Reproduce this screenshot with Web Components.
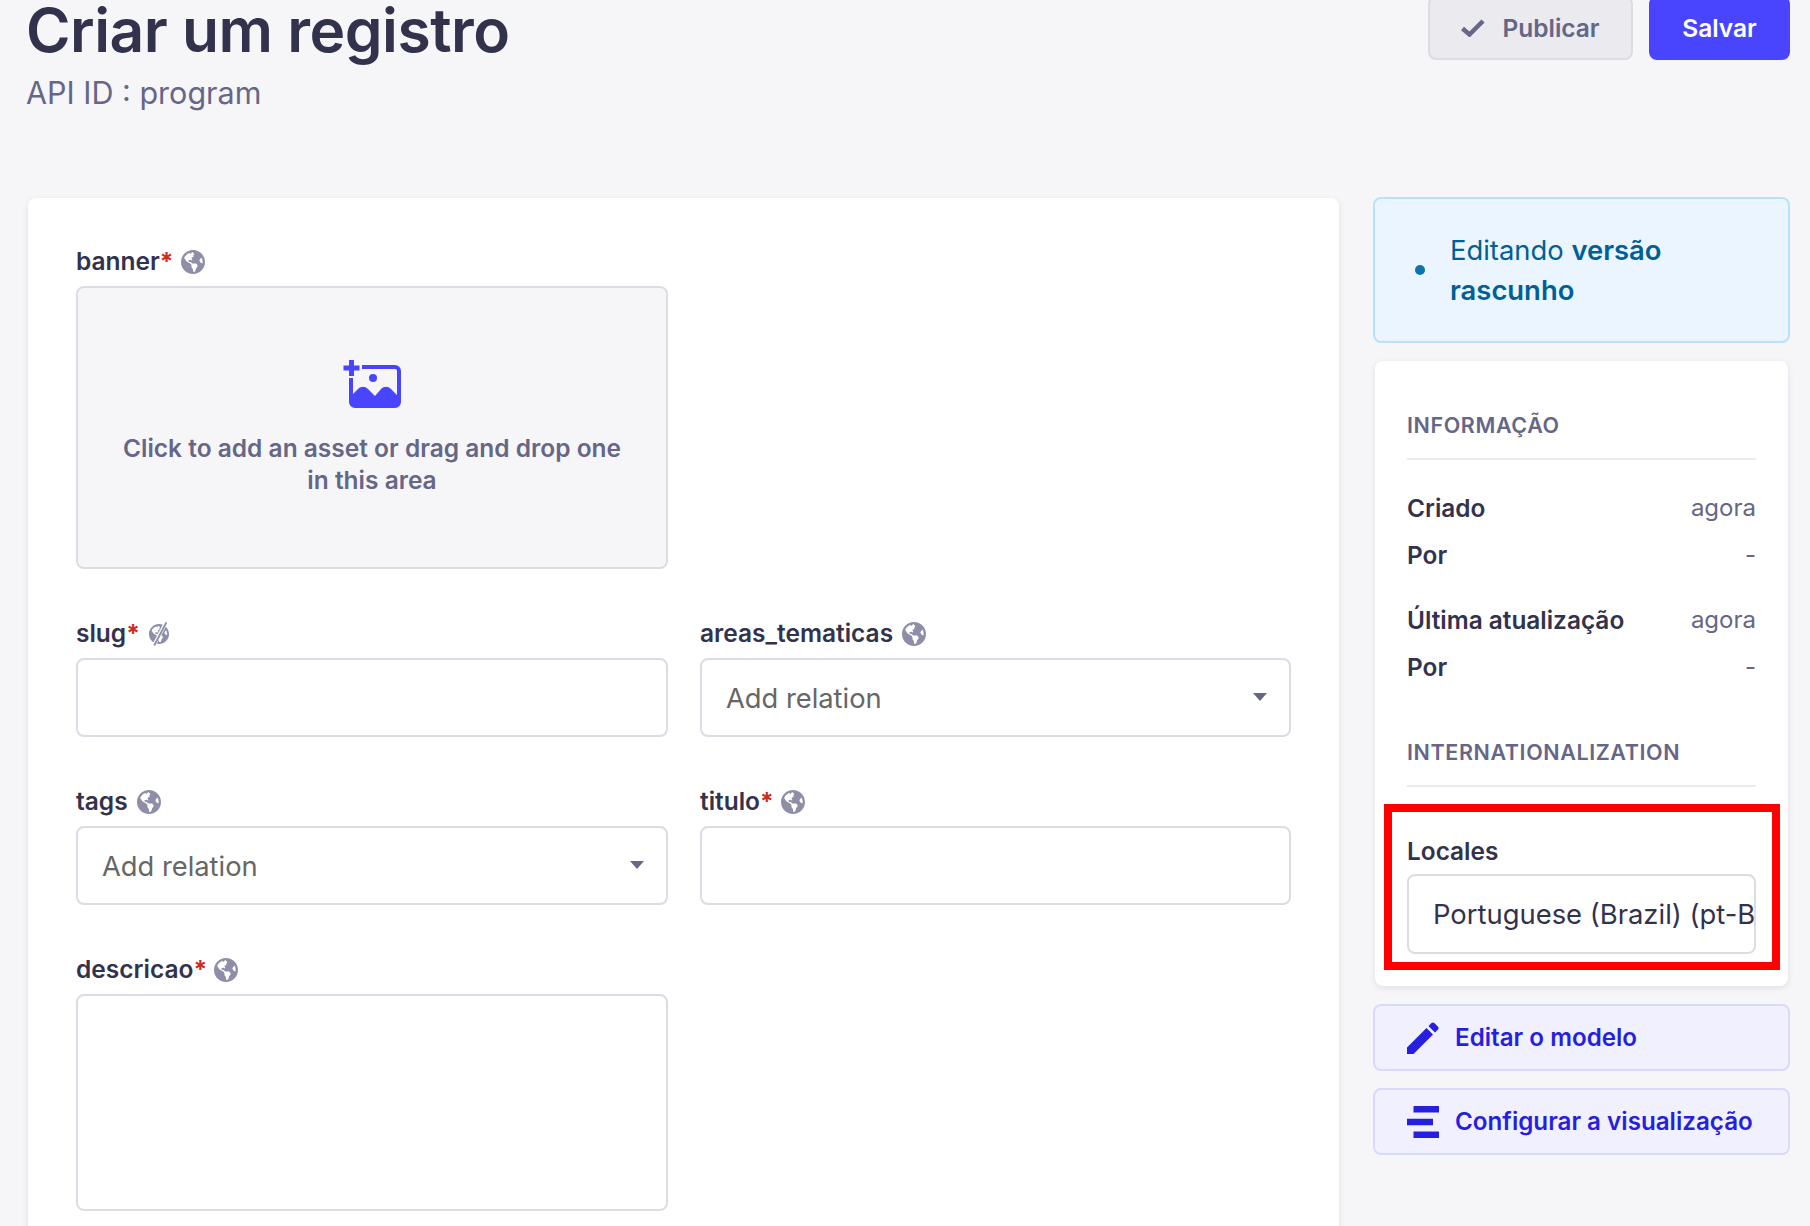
<!DOCTYPE html>
<html lang="pt-BR">
<head>
<meta charset="utf-8">
<title>Criar um registro</title>
<style>
  html, body { margin: 0; padding: 0; background: #f6f6f9; }
  body { font-family: Inter, "Liberation Sans", sans-serif; color: #32324d; height: 1226px; overflow: hidden; }
</style>
</head>
<body>
<edit-page>
  <page-header slot="header" heading="Criar um registro" sub="API ID : program"></page-header>
  <form-card slot="main">
    <form-field label="banner" required wide>
      <asset-drop>Click to add an asset or drag and drop one in this area</asset-drop>
    </form-field>
    <form-field label="slug" required nolocale><text-box></text-box></form-field>
    <form-field label="areas_tematicas"><text-box select placeholder="Add relation"></text-box></form-field>
    <form-field label="tags"><text-box select placeholder="Add relation"></text-box></form-field>
    <form-field label="titulo" required><text-box></text-box></form-field>
    <form-field label="descricao" required><text-box area></text-box></form-field>
  </form-card>
  <info-box slot="side">Editando <b>versão rascunho</b></info-box>
  <side-panel slot="side"></side-panel>
  <side-link slot="side" icon="pencil">Editar o modelo</side-link>
  <side-link slot="side" icon="layout">Configurar a visualização</side-link>
</edit-page>

<script>
const GLOBE_PATH = 'M248 8C111.03 8 0 119.03 0 256s111.03 248 248 248 248-111.03 248-248S384.97 8 248 8zm82.29 357.6c-3.9 3.88-7.99 7.95-11.31 11.28-2.99 3-5.1 6.7-6.17 10.71-1.51 5.66-2.73 11.38-4.77 16.87l-17.39 46.85c-13.76 3-28 4.69-42.65 4.69v-27.38c1.69-12.62-7.64-36.26-22.63-51.25-6-6-9.37-14.14-9.37-22.63v-32.01c0-11.64-6.27-22.34-16.46-27.97-14.37-7.95-34.81-19.06-48.81-26.11-11.48-5.78-22.1-13.14-31.65-21.75l-.8-.72a114.792 114.792 0 0 1-18.06-20.74c-9.38-13.77-24.66-36.42-34.59-51.14 20.47-45.5 57.36-82.04 103.2-101.89l24.01 12.01C203.48 89.74 216 82.01 216 70.11v-11.3c7.99-1.29 16.12-2.11 24.45-2.42l28.3 28.3c6.25 6.25 6.25 16.38 0 22.63L264 112l-10.34 10.34c-3.12 3.12-3.12 8.19 0 11.31l4.69 4.69c3.12 3.12 3.12 8.19 0 11.31l-8 8a8.008 8.008 0 0 1-5.66 2.34h-8.99c-2.08 0-4.08.81-5.58 2.27l-9.92 9.65a8.008 8.008 0 0 0-1.58 9.31l15.59 31.19c2.66 5.32-1.21 11.58-7.15 11.58h-5.64c-1.93 0-3.79-.7-5.24-1.96l-9.28-8.06a16.017 16.017 0 0 0-15.55-3.1l-31.17 10.39a11.95 11.95 0 0 0-8.17 11.34c0 4.53 2.56 8.66 6.61 10.69l11.08 5.54c9.41 4.71 19.79 7.16 30.31 7.16s22.59 27.29 32 32h66.75c8.49 0 16.62 3.37 22.63 9.37l13.69 13.69a30.503 30.503 0 0 1 8.93 21.57 46.536 46.536 0 0 1-13.72 32.98zM417 274.25c-5.79-1.45-10.84-5-14.15-9.97l-17.98-26.97a23.97 23.97 0 0 1 0-26.62l19.59-29.38c2.32-3.47 5.5-6.28 9.24-8.15l12.98-6.49C440.2 193.59 448 223.87 448 256c0 8.67-.74 17.16-1.82 25.54L417 274.25z'
const GLOBE = `<svg viewBox="0 8 496 496" width="24" height="24"><path fill="#8e8ea9" d="${GLOBE_PATH}"/></svg>`
const GLOBE_OFF = `<svg viewBox="-48 -40 592 592" width="24" height="24">
  <path fill="#8e8ea9" d="${GLOBE_PATH}"/>
  <path d="M420 -30 120 540" stroke="#fff" stroke-width="90"/>
  <path d="M430 -30 130 540" stroke="#8e8ea9" stroke-width="46"/>
</svg>`

class EditPage extends HTMLElement {
  constructor() {
    super()
    this.attachShadow({ mode: 'open' }).innerHTML = `
      <style>
        :host { display: block; padding: 0 20px 0 28px; }
        .cols { display: grid; grid-template-columns: 1311px 417px; column-gap: 34px; margin-top: 138px; align-items: start; }
        .side { display: flex; flex-direction: column; gap: 18px; margin-top: -1px; }
      </style>
      <slot name="header"></slot>
      <div class="cols">
        <slot name="main"></slot>
        <div class="side"><slot name="side"></slot></div>
      </div>
    `
  }
}

class PageHeader extends HTMLElement {
  constructor() {
    super()
    this.attachShadow({ mode: 'open' }).innerHTML = `
      <style>
        :host { display: flex; justify-content: space-between; align-items: flex-start; height: 60px; }
        .titles { margin-left: -2px; }
        h1 { margin: 0; font-size: 60.5px; line-height: 60px; font-weight: 600; color: #32324d; letter-spacing: -0.5px; }
        p { margin: 9px 0 0; font-size: 30.5px; line-height: 48px; color: #666687; }
        .actions { display: flex; gap: 16px; margin-top: -4px; }
        .btn { box-sizing: border-box; height: 64px; border-radius: 8px; display: flex; align-items: center; justify-content: center;
          font-size: 24.500px; font-weight: 600; gap: 17px; }
        .publish { width: 205px; background: #eaeaef; border: 2px solid #dcdce4; color: #666687; }
        .save { width: 141px; background: #4945ff; color: #fff; }
      </style>
      <div class="titles">
        <h1>${this.getAttribute('heading')}</h1>
        <p>${this.getAttribute('sub')}</p>
      </div>
      <div class="actions">
        <div class="btn publish">
          <svg viewBox="0 0 24 18" width="24" height="18"><path d="M1.500 9.500 8.500 15.500 22 2" fill="none" stroke="#666687" stroke-width="4.500"/></svg>
          <span>Publicar</span>
        </div>
        <div class="btn save">Salvar</div>
      </div>
    `
  }
}

class FormCard extends HTMLElement {
  constructor() {
    super()
    this.attachShadow({ mode: 'open' }).innerHTML = `
      <style>
        :host { display: block; background: #fff; border-radius: 8px; box-shadow: 0 2px 6px rgba(33,33,52,.1); padding: 49px 48px 100px 48px; }
        .grid { display: grid; grid-template-columns: 592px 591px; column-gap: 32px; row-gap: 50px; }
      </style>
      <div class="grid"><slot></slot></div>
    `
  }
}

class FormField extends HTMLElement {
  constructor() {
    super()
    const star = this.hasAttribute('required') ? '<span class="req">*</span>' : ''
    const icon = this.hasAttribute('nolocale') ? GLOBE_OFF : GLOBE
    this.attachShadow({ mode: 'open' }).innerHTML = `
      <style>
        :host { display: block; }
        :host([wide]) { grid-column: 1 / -1; width: 592px; }
        .label { display: flex; align-items: center; height: 30px; margin-bottom: 9px; font-size: 24.500px; font-weight: 600; color: #32324d; }
        .label span:first-child { margin-top: -2px; }
        .req { color: #d02b20; font-weight: 700; letter-spacing: -2px; }
        svg { margin-left: 9px; display: block; }
      </style>
      <div class="label"><span>${this.getAttribute('label')}${star}</span>${icon}</div>
      <slot></slot>
    `
  }
}

class AssetDrop extends HTMLElement {
  constructor() {
    super()
    this.attachShadow({ mode: 'open' }).innerHTML = `
      <style>
        :host { display: flex; flex-direction: column; align-items: center; box-sizing: border-box; height: 283px;
          background: #f6f6f9; border: 2px solid #dcdce4; border-radius: 8px; padding: 72px 40px 0; }
        svg { display: block; margin-bottom: 24px; }
        .txt { font-size: 24.500px; line-height: 32px; font-weight: 600; color: #666687; text-align: center; }
      </style>
      <svg viewBox="0 0 58 48" width="58" height="48">
        <path fill="#4945ff" d="M6 0h5v5.500h5.500v5H11V16H6v-5.500H.5v-5H6z"/>
        <path fill="#4945ff" d="M19 5h33a6 6 0 0 1 6 6v31a6 6 0 0 1-6 6H12a6 6 0 0 1-6-6V18h4v16l5-5c3-3 7-3 10 0l7 7 6-7c3-3 7-3 10 0l6 6V11a2 2 0 0 0-2-2H19z"/>
        <circle fill="#4945ff" cx="30" cy="18" r="4"/>
      </svg>
      <div class="txt"><slot></slot></div>
    `
  }
}

class TextBox extends HTMLElement {
  constructor() {
    super()
    const ph = this.getAttribute('placeholder')
    const caret = this.hasAttribute('select')
      ? '<svg viewBox="0 0 14 8" width="14" height="8"><path fill="#666687" d="M0 0h14L7 8z"/></svg>' : ''
    this.attachShadow({ mode: 'open' }).innerHTML = `
      <style>
        :host { display: flex; align-items: center; justify-content: space-between; box-sizing: border-box; height: 79px;
          background: #fff; border: 2px solid #dcdce4; border-radius: 8px; padding: 0 22px 0 24px; overflow: hidden; white-space: nowrap; }
        :host([area]) { height: 217px; }
        span { font-size: 27.300px; color: #666666; margin-top: 1px; }
        svg { margin-top: -2px; }
      </style>
      <span>${ph || ''}</span>${caret}
    `
  }
}

class InfoBox extends HTMLElement {
  constructor() {
    super()
    this.attachShadow({ mode: 'open' }).innerHTML = `
      <style>
        :host { display: flex; align-items: center; box-sizing: border-box; height: 146px; background: #eaf5ff; border: 2px solid #b8e1ff;
          border-radius: 8px; padding: 0 60px 0 40px; gap: 25px; color: #006096; font-size: 27.400px; line-height: 40px; }
        i { flex: none; width: 10px; height: 10px; border-radius: 50%; background: #0c75af; }
        ::slotted(b) { font-weight: 600; }
      </style>
      <i></i><div><slot></slot></div>
    `
  }
}

class MetaRow extends HTMLElement {
  constructor() {
    super()
    this.attachShadow({ mode: 'open' }).innerHTML = `
      <style>
        :host { display: flex; justify-content: space-between; line-height: 30px; font-size: 24px; }
        b { font-weight: 600; font-size: 24.400px; color: #32324d; }
        span { color: #666687; }
      </style>
      <b>${this.getAttribute('name')}</b><span>${this.getAttribute('value')}</span>
    `
  }
}

class SidePanel extends HTMLElement {
  constructor() {
    super()
    this.attachShadow({ mode: 'open' }).innerHTML = `
      <style>
        :host { display: block; position: relative; box-sizing: border-box; height: 625px; margin: 0 2px; background: #fff; border-radius: 8px;
          box-shadow: 0 2px 6px rgba(33,33,52,.1); padding: 49px 32px 33px; }
        h2 { margin: 0; font-size: 21.500px; line-height: 30px; font-weight: 600; color: #666687; letter-spacing: 0.6px; padding-bottom: 18px;
          border-bottom: 2px solid #eaeaef; }
        meta-row { margin-top: 17px; }
        meta-row.first { margin-top: 33px; }
        meta-row.gap { margin-top: 35px; }
        h2.sec2 { margin-top: 55px; }
        .field { margin-top: 49px; }
        .field b { display: block; font-size: 24.400px; line-height: 30px; font-weight: 600; color: #32324d; margin-bottom: 8px; }
        .mark { position: absolute; left: 9px; top: 443px; width: 396px; height: 166px; box-sizing: border-box; border: 8px solid #f00; }
      </style>
      <h2>INFORMAÇÃO</h2>
      <meta-row class="first" name="Criado" value="agora"></meta-row>
      <meta-row name="Por" value="-"></meta-row>
      <meta-row class="gap" name="Última atualização" value="agora"></meta-row>
      <meta-row name="Por" value="-"></meta-row>
      <h2 class="sec2">INTERNATIONALIZATION</h2>
      <div class="field">
        <b>Locales</b>
        <locale-box>Portuguese (Brazil) (pt-BR)</locale-box>
      </div>
      <div class="mark"></div>
    `
  }
}

class LocaleBox extends HTMLElement {
  constructor() {
    super()
    this.attachShadow({ mode: 'open' }).innerHTML = `
      <style>
        :host { display: block; box-sizing: border-box; height: 80px; background: #fff; border: 2px solid #dcdce4; border-radius: 8px;
          padding: 0 0 0 24px; }
        div { overflow: hidden; white-space: nowrap; line-height: 76px; font-size: 27.400px; color: #32324d; }
      </style>
      <div><slot></slot></div>
    `
  }
}

class SideLink extends HTMLElement {
  constructor() {
    super()
    const icons = {
      pencil: '<svg viewBox="0 0 32 32" width="32" height="32"><path fill="#271fe0" d="M0 25.500 19.500 6 26 12.500 6.500 32H0zM21.500 4l3-3c.8-.8 2-.8 2.800 0l3.700 3.700c.8.800.8 2 0 2.800l-3 3z"/></svg>',
      layout: '<svg viewBox="0 0 32 32" width="32" height="32"><path fill="#271fe0" d="M6.500 0H32v6.500H6.500zM0 12.800h26v6.400H0zM6.500 25.500H32V32H6.500z"/></svg>'
    }
    this.attachShadow({ mode: 'open' }).innerHTML = `
      <style>
        :host { display: flex; align-items: center; box-sizing: border-box; height: 67px; background: #f0f0ff; border: 2px solid #d9d8ff;
          border-radius: 8px; padding-left: 32px; gap: 16px; font-size: 24.200px; font-weight: 600; color: #271fe0; }
        :host(:last-child) { margin-top: -1px; }
        svg { display: block; flex: none; }
      </style>
      ${icons[this.getAttribute('icon')]}<span><slot></slot></span>
    `
  }
}

customElements.define('edit-page', EditPage)
customElements.define('page-header', PageHeader)
customElements.define('form-card', FormCard)
customElements.define('form-field', FormField)
customElements.define('asset-drop', AssetDrop)
customElements.define('text-box', TextBox)
customElements.define('info-box', InfoBox)
customElements.define('meta-row', MetaRow)
customElements.define('side-panel', SidePanel)
customElements.define('locale-box', LocaleBox)
customElements.define('side-link', SideLink)
</script>
</body>
</html>
